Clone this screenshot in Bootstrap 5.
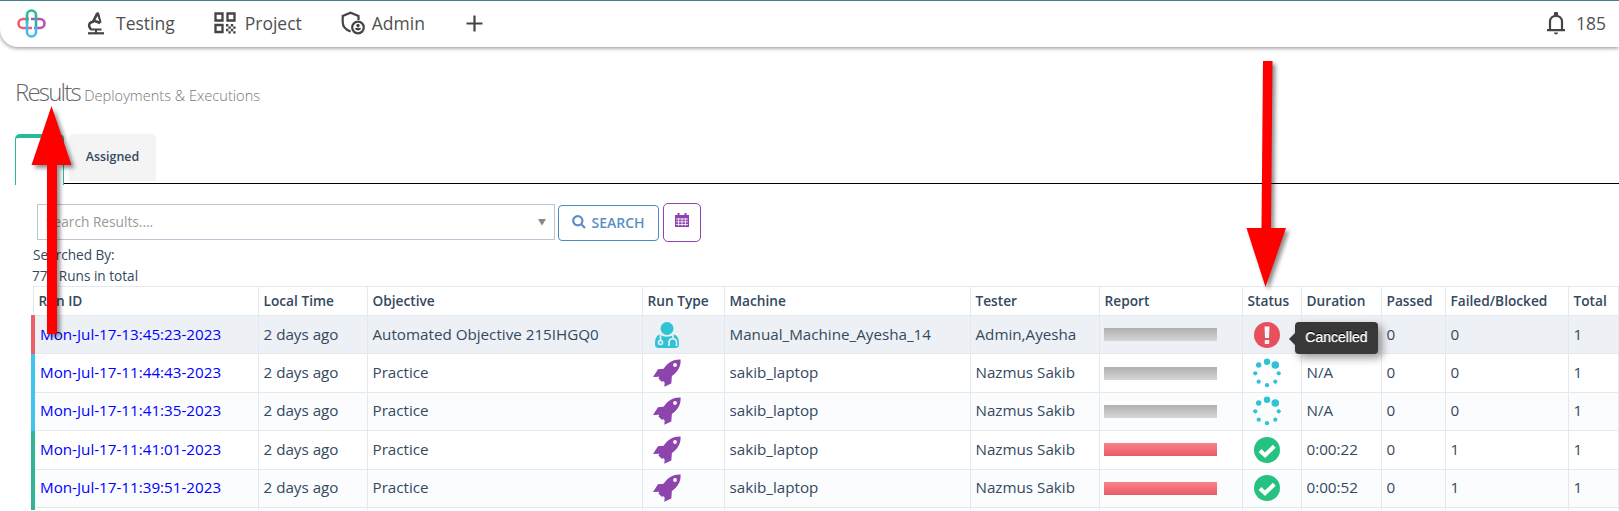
<!DOCTYPE html>
<html lang="en">
<head>
<meta charset="utf-8">
<meta name="viewport" content="width=device-width, initial-scale=1">
<title>Results</title>
<link href="https://cdn.jsdelivr.net/npm/bootstrap@5.3.0/dist/css/bootstrap.min.css" rel="stylesheet">
<style>
body{font-family:"Open Sans","Noto Sans",sans-serif;font-size:16px;color:#34495e;background:#fff;height:511px;overflow:hidden;position:relative}
.topbar{height:47px;border-top:1px solid #44808f;border-bottom-left-radius:18px;box-shadow:0 1px 4px rgba(0,0,0,.45);color:#444;font-size:17.5px;padding:0 13px 2px 17px}
.topbar a{color:#505050;text-decoration:none;line-height:24px}
.page-head{padding:30px 0 0 15px;height:87px}
.page-head h1{font-size:24px;font-weight:300;letter-spacing:-1.8px;color:#666;line-height:30px;margin:0}
.page-head small{font-size:14.6px;letter-spacing:0;color:#777;font-weight:300;margin-left:0}
.run-tabs{height:51px;margin-left:15px;gap:5px;position:relative}
.run-tabs::after{content:"";position:absolute;left:49px;right:0;top:49px;height:1px;background:#000}
.tab-on{width:49px;height:51px;border:1px solid #26b99a;border-top-width:4px;border-bottom:0;border-radius:5px 5px 0 0}
.tab-off{width:87px;height:47px;background:#f4f4f4;border-radius:5px 5px 0 0;font-size:12.4px;font-weight:600;line-height:46px;text-align:center;color:#34495e}
.search-row{padding:19px 0 0 37px;gap:3px;height:59px}
.search-box{width:518px;height:36px;border:1px solid #bcc5d6;color:#999;font-size:13.7px;padding:1px 8px 0 8px}
.btn-find{width:101px;height:36px;border:1px solid #4a8bc2;border-radius:4px;color:#5b8fc4;font-size:14px;font-weight:550;padding:0 0 2px;margin-top:1px}
.btn-cal{width:38px;height:39px;border:1px solid #8e44ad;border-radius:5px;padding:0 0 6px;margin:-1px 0 0 1px}
.meta{font-size:13.6px;line-height:21px;padding-left:33px;height:42px}
.runs{width:1586px;margin-left:31px;table-layout:fixed;border-collapse:collapse}
.runs th,.runs td{border:1px solid #e4e9ee;padding:0 0 0 5px;white-space:nowrap;vertical-align:middle}
.runs th{height:29px;font-size:13.7px;font-weight:550;line-height:20px}
.runs td{height:38.4px;font-size:15.2px;line-height:24px;padding-bottom:2px}
.runs td:nth-child(4),.runs td:nth-child(7),.runs td:nth-child(8){padding-bottom:0}
.runs tr.rest td{height:3px;border-bottom:0;padding:0}
.runs td:first-child{border-left:4px solid #2fb596}
.runs tr.bad td:first-child{border-left-color:#ea5f68}
.runs tr.going td:first-child{border-left-color:#40c4f0}
.runs tbody tr:nth-child(odd){background:#fafcfe}
.runs tbody tr.bad{background:#edf0f5}
.runs a{color:#00f;text-decoration:none}
.runs svg{display:block}
.meter{width:113px;height:13px;margin-left:-1px;background:linear-gradient(#b0b0b0,#d6d6d6)}
.meter.red{background:linear-gradient(#fb8289,#e85b66)}
.tip{position:absolute;left:1295px;top:322px;width:83px;height:32px;background:#383838;border-radius:4px;color:#fff;font:400 14px/31px "Liberation Sans",Arial,sans-serif;text-align:center;text-shadow:0 -1px 0 #000,0 0 1px #fff;box-shadow:4px 4px 8px rgba(0,0,0,.4)}
.tip::before{content:"";position:absolute;left:-6px;top:11px;border:6px solid transparent;border-left:0;border-right-color:#383838}
.marks{position:absolute;left:0;top:0;pointer-events:none;filter:drop-shadow(3px 3px 2px rgba(0,0,0,.45))}
</style>
</head>
<body>
<svg width="0" height="0" class="position-absolute" aria-hidden="true">
<symbol id="rocket" viewBox="0 0 28 28"><path fill="#8e44ad" d="M27.6.5C20 .3 15.500 3 10.600 9.700L5 10.300 0 18l6.300-.3-.8 1.800 3.200 3.300 1.800-.6 1.200 1.500-.4 4 7-3.200.6-7.500C24.500 13 28 8 27.600.5Z"/><circle cx="22" cy="6" r="1.900" fill="#fff"/></symbol>
<symbol id="spin" viewBox="0 0 28 30"><g fill="#30c3d6"><circle cx="14" cy="3.700" r="3.200"/><circle cx="22.300" cy="7" r="3.800"/><circle cx="5.700" cy="7" r="2.700"/><circle cx="2.300" cy="15.300" r="2.100"/><circle cx="25.700" cy="15.300" r="2.100"/><circle cx="5.700" cy="23.700" r="2.100"/><circle cx="22.300" cy="23.700" r="2.100"/><circle cx="14" cy="27.200" r="2.100"/></g></symbol>
<symbol id="ok" viewBox="0 0 26 26"><circle cx="13" cy="13" r="13" fill="#26c281"/><path d="m6 13.500 5 4.700 9.300-9" fill="none" stroke="#fff" stroke-width="4"/></symbol>
</svg>

<nav class="topbar d-flex align-items-center">
  <svg width="29" height="29" viewBox="0 0 29 29" fill="none" stroke-width="2.600"><path stroke="#ef5b6b" d="M12 10H6a4.500 4.500 0 0 0 0 9h9"/><path stroke="#b94fb0" d="M14 10h9a4.500 4.500 0 0 1 0 9h-6"/><path stroke="#27b99c" d="M10 14.500V6a4.500 4.500 0 0 1 9 0v12"/><path stroke="#3fbdf0" d="M10 12v11a4.500 4.500 0 0 0 9 0v-5"/></svg>
  <a href="#" class="d-flex align-items-center" style="margin-left:41px">
    <svg width="18" height="23" viewBox="0 0 18 23" fill="none" stroke="#444"><path stroke-width="2.200" d="M1 21.300h16"/><path stroke-width="2" d="M3.500 17.500h11M9 17v4"/><path stroke-width="2.400" d="M7 9.500c-5 .5-6.500 4-3 8"/><path fill="#444" d="m9.500 1 2-.3 2.500 9.500-1.500 1.500L5.500 9Z"/><path fill="#fff" stroke="none" d="m10.500 4 1.800 5-3.800-1Z"/></svg>
    <span style="margin-left:11px">Testing</span></a>
  <a href="#" class="d-flex align-items-center" style="margin-left:39px">
    <svg width="22" height="22" viewBox="0 0 22 22"><g fill="none" stroke="#444" stroke-width="2.300"><path d="M1.500 1.500h7v7h-7zM13.500 1.500h7v7h-7zM1.500 13h7v7h-7z"/></g><path fill="#444" d="M12 12h2.400v2.400H12zM16.800 12h2.400v2.400h-2.400zM14.400 14.400h2.400v2.400h-2.400zM19.200 14.400h2.400v2.400h-2.400zM12 16.800h2.400v2.400H12zM16.800 16.800h2.400v2.400h-2.400zM14.400 19.200h2.400v2.400h-2.400zM19.200 19.200h2.400v2.400h-2.400z"/></svg>
    <span style="margin-left:9px">Project</span></a>
  <a href="#" class="d-flex align-items-center" style="margin-left:39px">
    <svg width="24" height="24" viewBox="0 0 24 24" fill="none" stroke="#444" stroke-width="2.200"><path d="M17.500 9V5L9.500 1.800 1.700 5v6c0 4.500 3.500 8 8 9.500"/><circle cx="17" cy="16.500" r="5.800"/><g fill="#444" stroke="none"><circle cx="17" cy="14.500" r="1.700"/><path d="M13.700 17.600c2-1.200 4.600-1.200 6.600 0-1 2.400-5.600 2.400-6.600 0Z"/></g></svg>
    <span style="margin-left:7px">Admin</span></a>
  <svg style="margin-left:41px" width="17" height="17" viewBox="0 0 17 17"><path stroke="#444" stroke-width="2.200" d="M8.500.5v16M.5 8.500h16"/></svg>
  <a href="#" class="d-flex align-items-center ms-auto">
    <svg width="20" height="23" viewBox="0 0 20 23" fill="none" stroke="#444" stroke-width="2.200"><path d="M4 18V9.500C4 2 16 2 16 9.500V18M1 18.200h18"/><path fill="#444" stroke="none" d="M8 3V1.500a2 2 0 0 1 4 0V3ZM8 20.500h4a2 2 0 0 1-4 0Z"/></svg>
    <span style="margin-left:10px">185</span></a>
</nav>

<header class="page-head"><h1>Results <small>Deployments &amp; Executions</small></h1></header>

<div class="run-tabs d-flex"><div class="tab-on"></div><div class="tab-off">Assigned</div></div>

<div class="search-row d-flex">
  <div class="search-box d-flex align-items-center justify-content-between"><span>Search Results....</span><svg width="8" height="7"><path fill="#888" d="M0 0h8L4 6.500Z"/></svg></div>
  <button class="btn btn-find d-flex align-items-center justify-content-center"><svg width="14" height="14" viewBox="0 0 14 14" fill="none" stroke="#5b8fc4" stroke-width="2.200"><circle cx="5.800" cy="5.800" r="4.600"/><path d="m9 9 4 4"/></svg><span style="margin-left:5px">SEARCH</span></button>
  <button class="btn btn-cal d-flex align-items-center justify-content-center" aria-label="Calendar"><svg width="14" height="14" viewBox="0 0 14 14"><path fill="#8e44ad" d="M0 2h14v12H0z"/><path stroke="#fff" d="M1 6h12M1 8.800h12M1 11.500h12M3.600 5v8M7 5v8M10.400 5v8" stroke-width=".8"/><path stroke="#8e44ad" stroke-width="2" d="M3.500 0v4M10.500 0v4"/></svg></button>
</div>
<div class="meta"><div>Searched By:</div><div style="margin-left:-1px">779 Runs in total</div></div>

<table class="runs">
<colgroup><col style="width:225px"><col style="width:109px"><col style="width:275px"><col style="width:82px"><col style="width:246px"><col style="width:129px"><col style="width:143px"><col style="width:59px"><col style="width:80px"><col style="width:64px"><col style="width:123px"><col style="width:50px"></colgroup>
<thead><tr><th>Run ID</th><th>Local Time</th><th>Objective</th><th>Run Type</th><th>Machine</th><th>Tester</th><th>Report</th><th>Status</th><th>Duration</th><th>Passed</th><th>Failed/Blocked</th><th>Total</th></tr></thead>
<tbody>
<tr class="bad"><td><a href="#">Mon-Jul-17-13:45:23-2023</a></td><td>2 days ago</td><td>Automated Objective 215IHGQ0</td>
<td><svg style="margin-left:7px" width="24" height="26" viewBox="0 0 24 26"><circle cx="12" cy="6.500" r="6.500" fill="#30c3d6"/><path fill="#30c3d6" d="M5 12.500c4 3 10 3 14 0 4 1 5 5 5 9.500 0 3-1.500 4-4 4H4c-2.500 0-4-1-4-4 0-4.500 1-8.500 5-9.500Z"/><g fill="none" stroke="#edf0f5" stroke-width="1.600"><path d="M5.500 13v5M18 13v3M14 24v-3.500c0-5 7.500-5 7.500 0V24"/><circle cx="5.500" cy="20.500" r="2"/></g></svg></td>
<td>Manual_Machine_Ayesha_14</td><td>Admin,Ayesha</td><td><div class="meter"></div></td>
<td><svg style="margin-left:6px" width="26" height="26" viewBox="0 0 26 26"><circle cx="13" cy="13" r="13" fill="#e7505a"/><path fill="#f4f6fa" d="M10.500 4.500h5L15 16h-4ZM10.800 18h4.400v4h-4.400z"/></svg></td><td></td><td>0</td><td>0</td><td>1</td></tr>
<tr class="going"><td><a href="#">Mon-Jul-17-11:44:43-2023</a></td><td>2 days ago</td><td>Practice</td><td><svg style="margin-left:5px" width="28" height="28"><use href="#rocket"/></svg></td><td>sakib_laptop</td><td>Nazmus Sakib</td><td><div class="meter"></div></td><td><svg style="margin-left:5px" width="28" height="30"><use href="#spin"/></svg></td><td>N/A</td><td>0</td><td>0</td><td>1</td></tr>
<tr class="going"><td><a href="#">Mon-Jul-17-11:41:35-2023</a></td><td>2 days ago</td><td>Practice</td><td><svg style="margin-left:5px" width="28" height="28"><use href="#rocket"/></svg></td><td>sakib_laptop</td><td>Nazmus Sakib</td><td><div class="meter"></div></td><td><svg style="margin-left:5px" width="28" height="30"><use href="#spin"/></svg></td><td>N/A</td><td>0</td><td>0</td><td>1</td></tr>
<tr><td><a href="#">Mon-Jul-17-11:41:01-2023</a></td><td>2 days ago</td><td>Practice</td><td><svg style="margin-left:5px" width="28" height="28"><use href="#rocket"/></svg></td><td>sakib_laptop</td><td>Nazmus Sakib</td><td><div class="meter red"></div></td><td><svg style="margin-left:6px" width="26" height="26"><use href="#ok"/></svg></td><td>0:00:22</td><td>0</td><td>1</td><td>1</td></tr>
<tr><td><a href="#">Mon-Jul-17-11:39:51-2023</a></td><td>2 days ago</td><td>Practice</td><td><svg style="margin-left:5px" width="28" height="28"><use href="#rocket"/></svg></td><td>sakib_laptop</td><td>Nazmus Sakib</td><td><div class="meter red"></div></td><td><svg style="margin-left:6px" width="26" height="26"><use href="#ok"/></svg></td><td>0:00:52</td><td>0</td><td>1</td><td>1</td></tr>
<tr class="rest"><td></td><td></td><td></td><td></td><td></td><td></td><td></td><td></td><td></td><td></td><td></td><td></td></tr>
</tbody></table>

<div class="tip">Cancelled</div>
<svg class="marks" width="1619" height="511" viewBox="0 0 1619 511"><g fill="#f00"><path d="M51.500 106 71.500 165H57V334H47V165H31.500Z"/><path d="M1263 61h9.500L1271 228h15L1265.500 287 1246.500 228h15Z"/></g></svg>
<script src="https://cdn.jsdelivr.net/npm/bootstrap@5.3.0/dist/js/bootstrap.bundle.min.js"></script>
</body>
</html>
